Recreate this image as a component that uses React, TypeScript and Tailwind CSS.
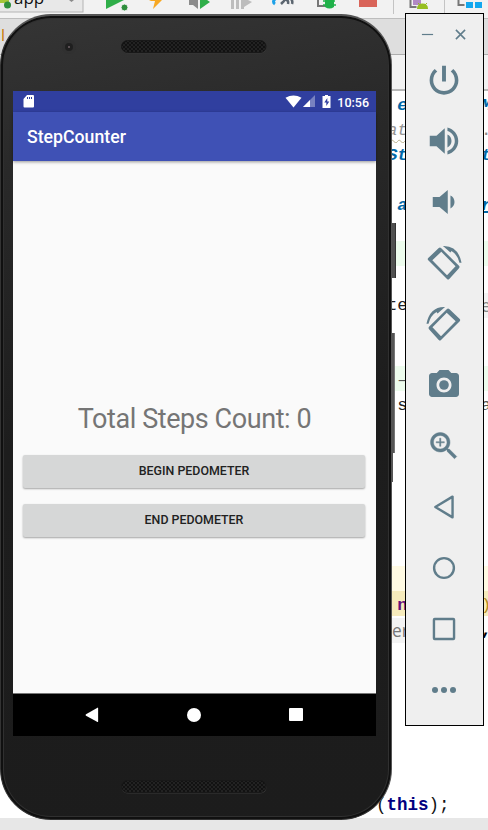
import React from "react";

const SLATE = "#607d8b";

/* Toolbar of the IDE, cut off by the top of the desktop */
function IdeToolbar() {
  return (
    <svg width="488" height="14" viewBox="0 0 488 14" className="block shrink-0 bg-[#f2f2f2]">
      <rect x="-2" y="-4" width="85" height="16" fill="#e8e8e8" stroke="#b4b4b4" />
      <path d="M0 0h9v3H0z" fill="#a4c639" />
      <circle cx="7.500" cy="5" r="3.500" fill="#2f8f3d" />
      <text x="14" y="4" fontFamily="Open Sans, sans-serif" fontSize="17" fill="#111">app</text>
      <path d="M69 0h5l-2.500 2z" fill="#8a8a8a" />
      <path d="M106 -8v17l18-9z" fill="#2fae49" />
      <circle cx="124.500" cy="7.500" r="3.500" fill="#2f8f3d" stroke="#f2f2f2" />
      <path d="M149 1h6l-2 8 9-9h-11z" fill="#f7a823" />
      <path d="M189 0h9v9l-5-4h-4z" fill="#8c8c8c" />
      <path d="M200 -5v14l10-7z" fill="#2fae49" />
      <path d="M231 -2h3v11h-3zM236 -2h3v11h-3zM241 -2h3v11h-3zM244 -2v9l8-5z" fill="#bdbdbd" />
      <path d="M275 -1q-3 3 0 5" fill="none" stroke="#1da1e8" strokeWidth="3" />
      <path d="M284 -1v2l-3 3M284 0q5-1 4 4M291 -1q2 2 1 5" fill="none" stroke="#5c6670" strokeWidth="2.500" />
      <path d="M318 -2v8h7" fill="none" stroke="#777" strokeWidth="2" />
      <path d="M325 0h9v7q-4.500 3-9 0z" fill="#20b14a" />
      <path d="M323 1h12M323 5h13" stroke="#20b14a" strokeWidth="1.500" />
      <rect x="359" y="-2" width="18" height="9" fill="#d96459" />
      <path d="M393.500 0v14M444.500 0v14" stroke="#c4c4c4" />
      <path d="M410.500 0v7h6" fill="none" stroke="#777" strokeWidth="2" />
      <rect x="413" y="-2" width="8" height="7" fill="#b18ac4" />
      <path d="M417 9q0-5.500 5.500-5.500T428 9z" fill="#97bf22" />
      <path d="M418 3l2 2M427 3l-2 2" stroke="#97bf22" />
      <path d="M458.500 0v5h6" fill="none" stroke="#777" strokeWidth="2" />
      <path d="M466 2h7v6h-7zM475 2h7v6h-7z" fill="#13a8ef" />
    </svg>
  );
}

/* One line of source code; the part behind the windows is left blank */
function CodeLine({ left, right = "", leftClass = "", rightClass = "", rowClass = "" }: {
  left: React.ReactNode; right?: React.ReactNode; leftClass?: string; rightClass?: string; rowClass?: string;
}) {
  return (
    <div className={"flex h-[25px] shrink-0 items-center pt-[3px] pl-[387px] whitespace-pre " + rowClass}>
      <span className={"w-[94px] shrink-0 overflow-hidden " + leftClass}>{left}</span>
      <span className={rightClass}>{right}</span>
    </div>
  );
}

function Editor() {
  return (
    <div className="flex h-[830px] w-[488px] flex-col overflow-hidden bg-white font-['Liberation_Mono',monospace] text-[17.300px] leading-[25px]">
      <IdeToolbar />
      <div className="flex h-[5px] shrink-0 border-b border-[#bdbdbd] bg-[#f2f2f2]" />
      <div className="h-[36px] shrink-0 border-b border-[#adadad] bg-[#dedede] pl-px font-['Open_Sans',sans-serif] text-[16px] leading-[32px] text-[#c77700]">l</div>
      <div className="h-[36px] shrink-0 border-b-2 border-[#b8b8b8] bg-[#f2f2f2]" />
      <CodeLine left=" e" right="M" leftClass="text-[#0068a8] font-bold italic" rightClass="text-[#0068a8] font-bold italic" />
      <CodeLine left="at" right="." leftClass="text-[#969696] italic underline decoration-wavy decoration-[#b9b08c] decoration-1 underline-offset-4" rightClass="text-[#888]" />
      <CodeLine left="St" right="t" leftClass="text-[#0068a8] font-bold italic" rightClass="text-[#0068a8] font-bold italic" />
      <CodeLine left="" />
      <CodeLine left=" a" right="r" leftClass="text-[#0068a8] font-bold italic" rightClass="text-[#0068a8] font-bold italic underline decoration-2" />
      <div className="h-[25px] shrink-0" />
      <CodeLine left="" rowClass="bg-[#edfced]" />
      <div className="h-[25px] shrink-0" />
      <CodeLine left="te" right="e" leftClass="text-[#222]" rightClass="bg-[#f3f3f3] font-['Open_Sans',sans-serif] text-[#888]" />
      <div className="h-[50px] shrink-0" />
      <CodeLine left=" –" rowClass="bg-[#edfced]" leftClass="text-[#555]" />
      <CodeLine left=".s" right="a" leftClass="text-[#222]" rightClass="text-[#555]" />
      <div className="h-[150px] shrink-0" />
      <div className="h-[25px] shrink-0 bg-[#fffae3]" />
      <CodeLine left=" n" right=")" rowClass="bg-[#f6ebbc]" leftClass="font-bold text-[#660e7a]" rightClass="text-[#b58a1d]" />
      <CodeLine left="er" right="," leftClass="bg-[#f3f3f3] pl-[5px] font-['Open_Sans',sans-serif] text-[#777]" rightClass="font-bold text-black" />
      <div className="h-[150px] shrink-0" />
      <div className="h-[27px] shrink-0 pt-[2px] pl-[376px] text-[17.500px] text-[#111]">(<b className="text-[#000080]">this</b>);</div>
      <div className="grow bg-[#e7e7e7]" />
    </div>
  );
}

function Speaker({ id }: { id: string }) {
  return (
    <svg width="146" height="14" viewBox="0 0 146 14" className="block">
      <defs>
        <pattern id={id} width="4" height="4" patternUnits="userSpaceOnUse">
          <rect width="4" height="4" fill="#222" />
          <circle cx="1" cy="1" r="0.900" fill="#090909" />
          <circle cx="3" cy="3" r="0.900" fill="#090909" />
        </pattern>
      </defs>
      <rect x="0.500" y="1.500" width="145" height="12" rx="6" fill="#383838" />
      <rect x="0.500" y="0.500" width="144.500" height="12" rx="6" fill={"url(#" + id + ")"} stroke="#181818" />
    </svg>
  );
}

function StatusBar() {
  return (
    <div className="flex h-[21px] items-center bg-[#303f9f] pr-[7px] pl-[10px] text-white">
      <svg width="12" height="14" viewBox="0 0 12 14" fill="currentColor">
        <path d="M4 0h6q1 0 1 1v10.500q0 1-1 1H1.500q-1 0-1-1V4z" />
        <path d="M4.500 2v2M6.500 2v2M8.500 2v2" stroke="#303f9f" />
      </svg>
      <svg width="48" height="15" viewBox="0 0 48 15" fill="currentColor" className="ml-auto">
        <path d="M1.500 3.800Q9.500-1 17.500 3.800L9.500 13.500z" />
        <path d="M31 1v12H19z" opacity="0.350" /><path d="M26 6v7h-7z" />
        <path d="M38.500 2h2.500V1h3v1h2.500v12h-8z" />
        <path d="M43.300 4l-3 4.500h2V12l3-4.500h-2z" fill="#303f9f" />
      </svg>
      <span className="mt-px ml-[5px] font-['Roboto',sans-serif] text-[12.500px] leading-[15px] font-medium">10:56</span>
    </div>
  );
}

function PedometerButton({ children }: { children: React.ReactNode }) {
  return (
    <button className="block h-[33px] w-[342px] rounded-[2px] bg-[#d6d7d7] text-[12.400px] font-medium text-[#212121] shadow-[0_1px_2px_rgba(0,0,0,0.35)]">
      {children}
    </button>
  );
}

function Phone() {
  return (
    <div className="absolute top-[14px] left-0">
      <div className="absolute top-[209px] left-[390px] h-[55px] w-[6px] border-r border-[#333] bg-[#505050]" />
      <div className="absolute top-[319px] left-[390px] h-[120px] w-[5px] border-r border-[#777] bg-[#555]" />
      <div className="absolute top-[439px] left-[389px] h-[29px] w-[4px] bg-[#555]" />
      <div className="relative flex h-[806px] w-[392px] flex-col overflow-hidden rounded-[51px] border border-t-2 border-[#555] border-b-[#333] border-l-[#333] bg-[linear-gradient(170deg,#353535_0%,#292929_18%,#1d1d1d_50%,#1c1c1c_100%)] pl-[12px] shadow-[inset_0_0_0_2px_#101010,inset_0_0_0_3px_#303030]">
        <div className="flex h-[75px] items-start pt-[24px]">
          <div className="ml-[49px] flex h-[14px] w-[14px] items-center justify-center rounded-full bg-[#303030]">
            <div className="flex h-[8px] w-[8px] items-center justify-center rounded-full bg-[#1f1f1f]"><div className="h-[2px] w-[2px] bg-[#5a5054]" /></div>
          </div>
          <div className="ml-[45px]"><Speaker id="earpiece" /></div>
        </div>
        <div className="h-[645px] w-[363px] shrink-0 bg-[#fafafa] font-['Roboto',sans-serif]">
          <StatusBar />
          <div className="relative flex h-[49px] items-center bg-[#3f51b5] pt-[2px] pl-[14px] text-[17.700px] font-medium text-white shadow-[0_1px_3px_rgba(0,0,0,0.4)]">StepCounter</div>
          <div className="flex h-[532px] flex-col pt-[240px] pl-[10px]">
            <div className="h-[36px] w-[343px] text-center text-[27px] leading-[36px] tracking-[-0.420px] whitespace-nowrap text-[#757575]">Total Steps Count: 0</div>
            <div className="mt-[18px] flex flex-col gap-[16px]">
              <PedometerButton>BEGIN PEDOMETER</PedometerButton>
              <PedometerButton>END PEDOMETER</PedometerButton>
            </div>
          </div>
          <div className="flex h-[43px] items-center justify-between border-t border-[#777] bg-black pr-[73px] pb-px pl-[72px]">
            <svg width="14" height="16" viewBox="0 0 14 16" fill="white"><path d="M1 7.200L12.500.7q.6-.3.6.5v13.200q0 .8-.6.5L1 8.700q-1-.7 0-1.500z" /></svg>
            <div className="h-[14px] w-[14px] rounded-full bg-white" />
            <div className="h-[13px] w-[14px] rounded-[1px] bg-white" />
          </div>
        </div>
        <div className="mt-[44px] ml-[108px]"><Speaker id="mouthpiece" /></div>
      </div>
    </div>
  );
}

function Icon({ children }: { children: React.ReactNode }) {
  return <svg width="36" height="36" viewBox="0 0 24 24" fill={SLATE} className="block">{children}</svg>;
}

/* Tilted handset with a curved arrow over its upper right corner */
function RotateShape() {
  return (
    <>
      <path fillRule="evenodd" d="M8.500 2Q9.300 1.300 10 2L22 13.900Q22.700 14.700 22 15.500L15.500 22.700Q14.800 23.400 14 22.700L1.500 10.200Q.8 9.400 1.500 8.700zM10.200 4.500L4.200 10.200 14 20.200 19.700 14.200z" />
      <path d="M11.300.6Q21.400.2 23.700 11.900H22.300Q21 6.300 17 4L16.300 5z" />
    </>
  );
}

function EmulatorToolbar() {
  return (
    <div className="absolute top-[13px] left-[405px] flex h-[713px] w-[79px] flex-col border border-black bg-[#efefef]">
      <div className="flex h-[40px] w-full shrink-0 items-center justify-between pr-[17px] pl-[16px]">
        <div className="h-px w-[11px] bg-[#607d8b] shadow-[0_0_1px_#607d8b]" />
        <svg width="11" height="11" viewBox="0 0 12 12" fill="none" stroke={SLATE} strokeWidth="1.700"><path d="M1 1l10 10M11 1L1 11" /></svg>
      </div>
      <div className="mt-[8px] ml-[20px] flex flex-col gap-[25px]">
        <Icon><path d="M13.300 2.500h-2.600v10.500h2.600V2.500zm4.900 2.200l-1.700 1.700C18.300 7.700 19.200 9.900 19.200 12.200c0 4-3.200 7.200-7.200 7.200s-7.200-3.200-7.200-7.200c0-2.300.9-4.500 2.700-5.800L5.800 4.700C3.700 6.500 2.400 9.100 2.400 12.200c0 5.300 4.300 9.600 9.600 9.600s9.600-4.300 9.600-9.600c0-3.100-1.300-5.700-3.400-7.500z" /></Icon>
        <Icon><path d="M2.500 8.500v7h4.500l5.500 5V3.500L7 8.500H2.500zm14.500 3.500c0-1.900-1-3.500-2.700-4.300v8.600c1.700-.8 2.700-2.400 2.700-4.300zM14.300 3v2.400c2.900.9 4.900 3.500 4.900 6.600s-2 5.700-4.900 6.600V21c4.100-1 7.200-4.600 7.200-9s-3.100-8-7.200-9z" /></Icon>
        <Icon><path d="M19 12c0-1.900-1-3.500-2.700-4.300v8.600C18 15.500 19 13.900 19 12zM4.500 8.700v6.600H9l5.500 4.700V4L9 8.700H4.500z" /></Icon>
        <Icon><RotateShape /></Icon>
        <Icon><g transform="matrix(-1 0 0 1 24 0)"><RotateShape /></g></Icon>
        <Icon><circle cx="12" cy="12" r="3.200" /><path d="M9 2L7.170 4H4c-1.100 0-2 .9-2 2v12c0 1.100.9 2 2 2h16c1.100 0 2-.9 2-2V6c0-1.100-.9-2-2-2h-3.170L15 2H9zm3 15c-2.760 0-5-2.240-5-5s2.240-5 5-5 5 2.240 5 5-2.240 5-5 5z" /></Icon>
        <Icon><path d="M15.500 14h-.79l-.28-.27C15.410 12.590 16 11.110 16 9.500 16 5.910 13.090 3 9.500 3S3 5.910 3 9.500 5.910 16 9.500 16c1.610 0 3.090-.59 4.230-1.570l.27.28v.79l5 4.990L20.490 19l-4.990-5zm-6 0C7.010 14 5 11.990 5 9.500S7.010 5 9.500 5 14 7.010 14 9.500 11.990 14 9.500 14zM9.900 6.800h-.8v2.300H6.800v.8h2.300v2.300h.8V9.900h2.300v-.8H9.900z" stroke={SLATE} strokeWidth="0.300" /></Icon>
        <Icon><path d="M17.700 5.100v13.800L6.200 12z" fill="none" stroke={SLATE} strokeWidth="1.600" strokeLinejoin="round" /></Icon>
        <Icon><circle cx="12" cy="12" r="6.600" fill="none" stroke={SLATE} strokeWidth="1.600" /></Icon>
        <Icon><rect x="5.300" y="5.300" width="13.400" height="13.400" rx="0.500" fill="none" stroke={SLATE} strokeWidth="1.600" /></Icon>
        <Icon><circle cx="6" cy="12" r="2" /><circle cx="12" cy="12" r="2" /><circle cx="18" cy="12" r="2" /></Icon>
      </div>
    </div>
  );
}

export default function App() {
  return (
    <div className="relative h-[830px] w-[488px] overflow-hidden">
      <Editor />
      <Phone />
      <EmulatorToolbar />
    </div>
  );
}
